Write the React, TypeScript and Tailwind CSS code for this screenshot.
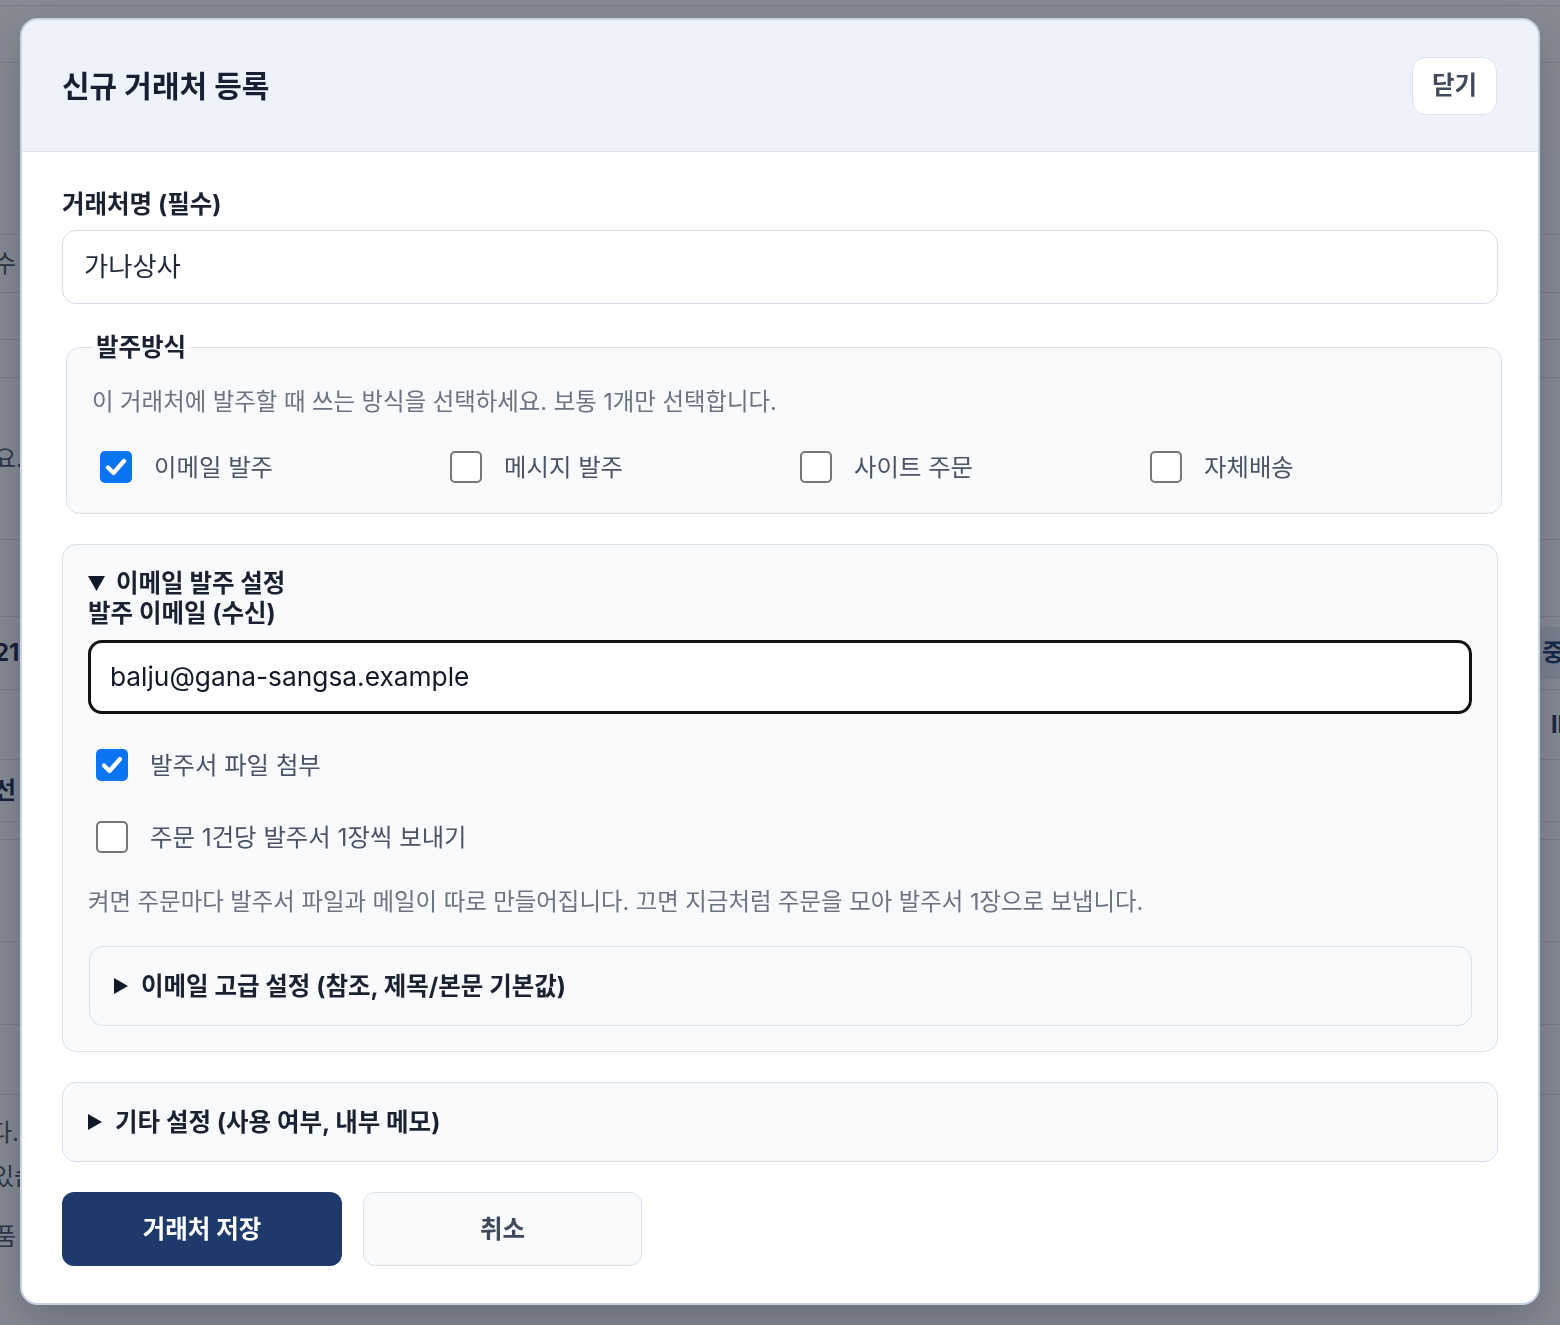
import React from 'react';

const methods = [
  { label: '이메일 발주', checked: true },
  { label: '메시지 발주', checked: false },
  { label: '사이트 주문', checked: false },
  { label: '자체배송', checked: false },
];

// page rows sitting behind the dim overlay
const pageRows: { h: string; left?: string; leftBold?: boolean; right?: string; rightBold?: boolean; band?: boolean }[] = [
  { h: 'h-[6px]' },
  { h: 'h-[57px]' },
  { h: 'h-[172px]' },
  { h: 'h-[58px]', left: '수' },
  { h: 'h-[47px]' },
  { h: 'h-[38px]' },
  { h: 'h-[162px]', left: '요.' },
  { h: 'h-[77px]' },
  { h: 'h-[73px]', left: '21', leftBold: true, right: '중', rightBold: true, band: true },
  { h: 'h-[70px]', right: 'll', rightBold: true },
  { h: 'h-[62px]', left: '선', leftBold: true },
  { h: 'h-[18px]' },
  { h: 'h-[102px]' },
  { h: 'h-[83px]' },
  { h: 'h-[70px]' },
];

function Check({ checked }: { checked: boolean }) {
  if (!checked) {
    return <span className="block h-8 w-8 shrink-0 rounded-[5px] border-2 border-[#767676] bg-white" />;
  }
  return (
    <span className="flex h-8 w-8 shrink-0 items-center justify-center rounded-[5px] bg-[#0b74f2]">
      <svg width="24" height="24" viewBox="0 0 24 24" fill="none">
        <path d="M4 12.5 L9.5 18 L20 6" stroke="white" strokeWidth="4.2" strokeLinecap="round" strokeLinejoin="round" />
      </svg>
    </span>
  );
}

function TriDown() {
  return (
    <svg width="17" height="15" viewBox="0 0 17 15" className="shrink-0">
      <path d="M0 0 H17 L8.5 15 Z" fill="#111827" />
    </svg>
  );
}

function TriRight() {
  return (
    <svg width="14" height="16" viewBox="0 0 14 16" className="shrink-0">
      <path d="M0 0 L14 8 L0 16 Z" fill="#111827" />
    </svg>
  );
}

export default function App() {
  return (
    <div className="relative min-h-screen overflow-hidden bg-white font-[Inter,'Noto_Sans_CJK_KR',sans-serif] text-[#1a2231]">
      {/* page behind the modal */}
      <div className="flex flex-col">
        {pageRows.map((r, i) => (
          <div key={i} className={`flex ${r.h} items-center justify-between border-b border-[#e3e7ee]`}>
            <span className={`${r.leftBold ? 'font-bold text-[#1e2a44]' : 'text-[#4b5563]'} -ml-[6px] text-[24px]`}>{r.left}</span>
            <span className={`${r.band ? 'bg-[#e8edf5] py-[8px]' : ''} ${r.rightBold ? 'font-bold text-[#1e3a6b]' : ''} -mr-[4px] pl-[4px] text-[24px]`}>{r.right}</span>
          </div>
        ))}
        <div className="flex flex-col gap-[8px] pt-[20px] text-[24px] text-[#4b5563]">
          <span className="-ml-[10px]">다.</span>
          <span className="-ml-[8px]">있습</span>
          <span className="mt-[16px] -ml-[6px]">품</span>
        </div>
      </div>

      {/* overlay + modal */}
      <div className="fixed inset-0 bg-[#0f172a]/50 px-[20px] pt-[18px]">
        <div className="w-full overflow-hidden rounded-[18px] border-2 border-[#c9d3e6] bg-white shadow-[0_20px_50px_rgba(15,23,42,0.25)]">
          <div className="flex h-[132px] items-center justify-between border-b border-[#dde3ee] bg-[#eef2fa] px-[40px]">
            <h2 className="text-[30px] leading-[36px] font-bold text-[#172033]">신규 거래처 등록</h2>
            <button className="mr-[1px] h-[58px] rounded-[14px] border border-[#dde3ee] bg-white px-[19px] text-[24.5px] font-bold text-[#3f4a5a]">
              닫기
            </button>
          </div>

          <div className="px-[40px] pt-[37px] pb-[37px]">
            <label className="block text-[24.5px] leading-[30px] font-bold">거래처명 (필수)</label>
            <div className="mt-[11px] flex h-[74px] items-center rounded-[14px] border border-[#d6dde8] bg-white px-[21px] text-[26.3px] text-[#1f2937]">
              가나상사
            </div>

            <fieldset className="mt-[28px] ml-[4px] -mr-[4px] rounded-[14px] border border-[#dbe2ec] bg-[#f8fafc] px-[25px] pt-[25px] pb-[30px]">
              <legend className="px-[4px] text-[24.5px] leading-[30px] font-bold">발주방식</legend>
              <p className="text-[23.4px] leading-[30px] text-[#6b7382]">
                이 거래처에 발주할 때 쓰는 방식을 선택하세요. 보통 1개만 선택합니다.
              </p>
              <div className="mt-[34px] grid grid-cols-[repeat(3,350px)_1fr]">
                {methods.map((m) => (
                  <label key={m.label} className="flex items-center gap-[22px] pl-[8px]">
                    <Check checked={m.checked} />
                    <span className="text-[24.4px] leading-[30px] text-[#4a5466]">{m.label}</span>
                  </label>
                ))}
              </div>
            </fieldset>

            <details open className="mt-[30px] rounded-[14px] border border-[#dbe2ec] bg-[#f8fafc] px-[25px] pt-[23px] pb-[25px]">
              <summary className="flex items-center gap-[11px] text-[24.5px] leading-[30px] font-bold">
                <TriDown />
                이메일 발주 설정
              </summary>
              <label className="block text-[24.5px] leading-[30px] font-bold">발주 이메일 (수신)</label>
              <div className="mt-[12px] flex h-[74px] items-center rounded-[14px] border-[3px] border-[#111111] bg-white px-[19px] text-[26.3px] text-[#111827]">
                balju@gana-sangsa.example
              </div>

              <label className="mt-[35px] flex items-center gap-[22px] pl-[8px]">
                <Check checked />
                <span className="text-[24.4px] leading-[30px] text-[#4a5466]">발주서 파일 첨부</span>
              </label>
              <label className="mt-[40px] flex items-center gap-[22px] pl-[8px]">
                <Check checked={false} />
                <span className="text-[24.4px] leading-[30px] text-[#4a5466]">주문 1건당 발주서 1장씩 보내기</span>
              </label>
              <p className="mt-[34px] text-[23.4px] leading-[30px] text-[#6b7382]">
                켜면 주문마다 발주서 파일과 메일이 따로 만들어집니다. 끄면 지금처럼 주문을 모아 발주서 1장으로 보냅니다.
              </p>

              <details className="mt-[29px] ml-[1px] rounded-[14px] border border-[#dbe2ec] bg-[#f8fafc] px-[24px]">
                <summary className="flex h-[78px] items-center gap-[13px] text-[24.5px] font-bold">
                  <TriRight />
                  이메일 고급 설정 (참조, 제목/본문 기본값)
                </summary>
              </details>
            </details>

            <details className="mt-[30px] rounded-[14px] border border-[#dbe2ec] bg-[#f8fafc] px-[25px]">
              <summary className="flex h-[78px] items-center gap-[13px] text-[24.5px] font-bold">
                <TriRight />
                기타 설정 (사용 여부, 내부 메모)
              </summary>
            </details>

            <div className="mt-[30px] flex gap-[21px]">
              <button className="h-[74px] w-[280px] rounded-[12px] bg-[#1e3a6b] text-[24.5px] font-bold text-white">
                거래처 저장
              </button>
              <button className="h-[74px] w-[279px] rounded-[12px] border border-[#dbe2ec] bg-[#f8fafc] text-[24.5px] font-bold text-[#3f4a5a]">
                취소
              </button>
            </div>
          </div>
        </div>
      </div>
    </div>
  );
}
